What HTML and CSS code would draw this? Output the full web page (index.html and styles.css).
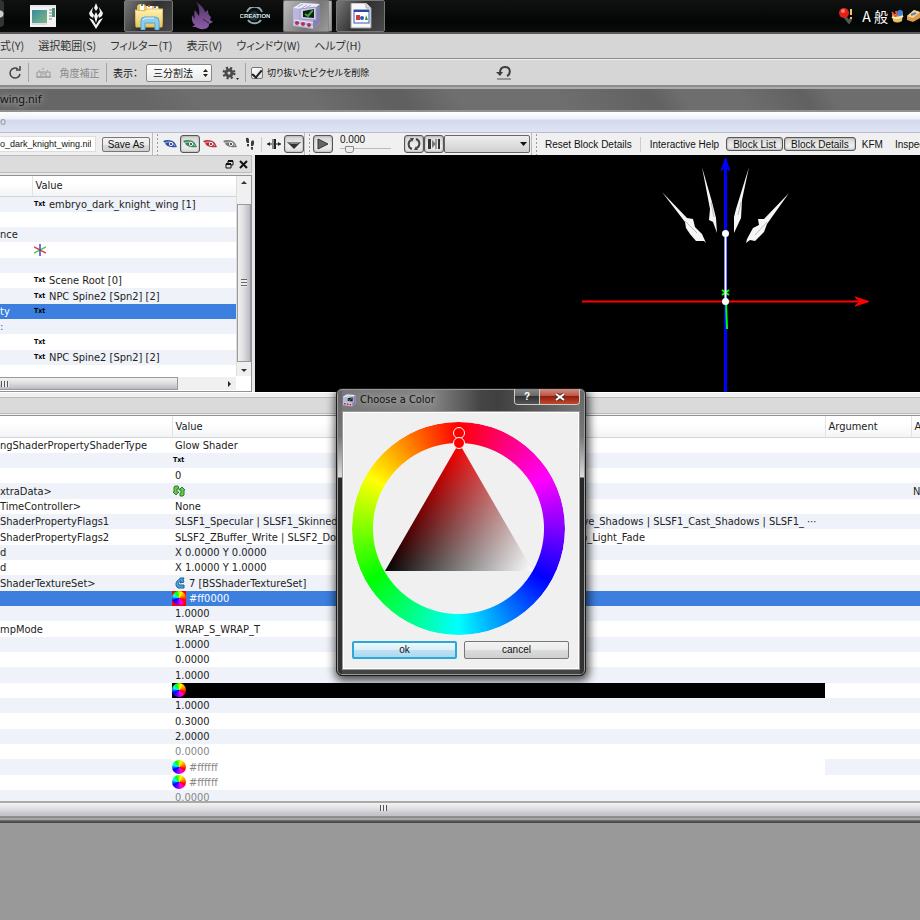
FILE: index.html
```html
<!DOCTYPE html>
<html lang="ja">
<head>
<meta charset="utf-8">
<title>wing.nif</title>
<link rel="stylesheet" href="styles.css">
</head>
<body>
<svg class="defs" width="0" height="0" aria-hidden="true">
  <defs>
    <linearGradient id="folder" x1="0" y1="0" x2="0" y2="1"><stop offset="0" stop-color="#fff3b4"/><stop offset="1" stop-color="#e8c860"/></linearGradient>
    <linearGradient id="screen" x1="0" y1="0" x2="1" y2="1"><stop offset="0" stop-color="#3c8a9c"/><stop offset="1" stop-color="#7db886"/></linearGradient>
    <linearGradient id="bird" x1="0" y1="0" x2="0" y2="1"><stop offset="0" stop-color="#4d3560"/><stop offset="1" stop-color="#8c5ca8"/></linearGradient>
    <symbol id="eye" viewBox="0 0 14 10">
      <path d="M0 2C4 0 10 1 12 4L14 8C10 9 3 8 2 4z" fill="currentColor"/>
      <path d="M2 4C5 2 10 3 12 7" fill="none" stroke="#fff" stroke-opacity=".6"/>
      <circle cx="8" cy="5" r="2" fill="#fff"/><circle cx="8" cy="5" r="1" fill="#222"/>
    </symbol>
    <symbol id="nif" viewBox="0 0 30 28">
      <path d="M2 6L10 1 29 2 29 21 22 27 2 24z" fill="#b9b7dd"/>
      <path d="M2 6L22 8 29 2 10 1z" fill="#ececfb"/><path d="M22 8L29 2V21L22 27z" fill="#8583ad"/>
      <path d="M7 5L12 2M11 6L16 3M15 6L20 3" stroke="#aaa8cf"/>
      <path d="M9 7L25 5V18L9 17z" fill="#cfcdec" stroke="#9a98c0"/>
      <path d="M12 9L23 7V16L12 15z" fill="#151a18"/>
      <path d="M14 12L17 14 22 8" fill="none" stroke="#36a83a" stroke-width="2"/>
      <path d="M3 18L22 21M3 22L22 25" stroke="#e9e9fa"/>
      <circle cx="6" cy="21" r="2" fill="#b5304b"/><circle cx="12" cy="22" r="2" fill="#b5304b"/><circle cx="18" cy="23" r="2" fill="#b5304b"/>
    </symbol>
  </defs>
</svg>

<div class="desktop">
  <header class="taskbar">
    <span class="orb"></span>
    <nav class="tasks" aria-label="Taskbar">
      <button class="task" aria-label="Window"><svg width="26" height="24" viewBox="0 0 26 24"><path d="M0 1H26V23H0z" fill="#f3f3f3"/><path d="M0 1H26V3H0z" fill="#dce8ee"/><rect x="2" y="6" width="15" height="13" fill="url(#screen)"/><path d="M19 6H22M19 9H22M19 12H22M19 15H22" stroke="#adc2b8" stroke-width="2"/><rect x="22" y="4" width="3" height="9" fill="#57907a"/><path d="M2 20H17" stroke="#c2c8d2"/></svg></button>
      <button class="task" aria-label="Skyrim"><svg width="16" height="26" viewBox="0 0 16 26"><g fill="#f4f4f4"><path d="M8 0L10 5 8 8 6 5z"/><path d="M5 4L4 9 6 12 5 15 2 13 1 10z"/><path d="M11 4L12 9 10 12 11 15 14 13 15 10z"/><path d="M8 9L10 13 8 20 6 13z"/><path d="M1 15L5 17 8 22 11 17 15 15 8 26z"/></g></svg></button>
      <button class="task open" aria-label="Explorer"><svg width="28" height="28" viewBox="0 0 28 28"><path d="M2 4L4 2H9L11 4H23L24 7V24H2z" fill="#e8c768"/><path d="M5 3H9V8H5zM12 4H17V8H12zM19 5H23V9H19z" fill="#fff"/><path d="M6 2H8V4H6z" fill="#31a54f"/><path d="M13 3H15V5H13z" fill="#d74d3c"/><path d="M19 4H21V6H19z" fill="#3c7fd0"/><path d="M0 8L10 9 12 7H28L27 25H1z" fill="url(#folder)" stroke="#e0bd58"/><path d="M6 28V19Q6 15 10 15H20Q24 15 24 19V28H20V21H10V28z" fill="#8fcdf0" stroke="#4fa4d6"/><path d="M8 18Q8 16 12 16H19" fill="none" stroke="#e3f5ff"/></svg></button>
      <button class="task" aria-label="Phoenix"><svg width="22" height="28" viewBox="0 0 22 28"><path d="M5 0C10 3 13 6 14 10L17 8C17 12 18 13 20 15L19 18 22 20 18 22C19 27 10 29 5 25L1 25 4 23C0 20 1 16 1 13L4 17C3 13 3 11 4 8L8 14C9 9 8 4 5 0z" fill="url(#bird)"/><path d="M12 18C14 17 15 20 18 21" fill="none" stroke="#2b1838"/></svg></button>
      <button class="task" aria-label="Creation Kit"><svg width="30" height="18" viewBox="0 0 30 18"><path d="M7 5A8 8 0 0 1 22 5M8 13A8 8 0 0 0 21 13" fill="none" stroke="#8ea9ae" stroke-width="2"/><circle cx="14" cy="9" r="5" fill="#1f3034"/><text x="15" y="11" text-anchor="middle" class="creation">CREATION</text></svg></button>
      <button class="task open active" aria-label="NifSkope"><svg width="30" height="28"><use href="#nif"/></svg></button>
      <button class="task open" aria-label="Document"><svg width="22" height="26" viewBox="0 0 22 26"><path d="M1 0H16L21 5V25H1z" fill="#f8f8f8" stroke="#999"/><path d="M16 0V5H21" fill="#ddd" stroke="#aaa"/><rect x="4" y="7" width="15" height="13" fill="#fff" stroke="#3b56b5"/><path d="M4 8H19" stroke="#2d48a4" stroke-width="2"/><path d="M6 12H10V17H6z" fill="#d33b3b"/><circle cx="12" cy="15" r="2" fill="#2e54c4"/><path d="M15 17L16 12 18 17z" fill="#2d9740"/></svg></button>
    </nav>
    <div class="tray">
      <svg width="14" height="16" viewBox="0 0 14 16"><path d="M6 9L10 14 12 11" fill="none" stroke="#555" stroke-width="3"/><circle cx="5" cy="5" r="5" fill="#e0221b"/><circle cx="4" cy="3" r="2" fill="#ff7a66"/><path d="M12 1V7M12 9V11" stroke="#f1c668" stroke-width="2"/></svg>
      <span class="ime">A 般</span>
      <svg width="13" height="14" viewBox="0 0 13 14"><path d="M1 5H12L11 12Q6 15 2 12z" fill="#e9bb62"/><path d="M1 3L5 8M5 2L6 7" stroke="#e8542b" stroke-width="2"/><circle cx="9" cy="4" r="3" fill="#3c85d8"/><path d="M1 8Q6 11 12 7" fill="none" stroke="#fff0bd" stroke-width="2"/></svg>
      <svg width="13" height="14" viewBox="0 0 13 14"><path d="M0 7L7 1 13 3V9L6 13 0 11z" fill="#d99b4a"/><path d="M0 7L7 1 13 3 6 9z" fill="#f6d79a"/><path d="M4 6L9 4" stroke="#5884b5" stroke-width="2"/></svg>
    </div>
  </header>

  <nav class="menubar" aria-label="Menu">
    <a href="#">式(Y)</a><a href="#">選択範囲(S)</a><a href="#">フィルター(T)</a><a href="#">表示(V)</a><a href="#">ウィンドウ(W)</a><a href="#">ヘルプ(H)</a>
  </nav>

  <div class="options">
    <button class="plain rotate" aria-label="Rotate"><svg width="14" height="14" viewBox="0 0 14 14"><path d="M10 3A5 5 0 1 0 12 8" fill="none" stroke="#444" stroke-width="1.500"/><path d="M8 4H12V0" fill="none" stroke="#444" stroke-width="1.500"/></svg></button>
    <span class="rule"></span>
    <button class="plain level" disabled><svg width="15" height="12" viewBox="0 0 15 12"><g fill="none" stroke="#999"><path d="M1 5H14V10H1zM5 5V10M10 5V10M6 7H9M0 10H15"/><path d="M3 3L4 4M7 1V3M12 3L11 4"/></g></svg>角度補正</button>
    <span class="rule"></span>
    <label class="overlay-label" for="overlay">表示：</label>
    <span class="picker"><select id="overlay"><option>三分割法</option></select><svg width="7" height="8" viewBox="0 0 7 8"><path d="M1 3L3.500 0 6 3zM1 5L3.500 8 6 5z" fill="#222"/></svg></span>
    <button class="plain gear" aria-label="Settings"><svg width="18" height="16" viewBox="0 0 18 16"><circle cx="7" cy="8" r="5" fill="none" stroke="#4a4a4a" stroke-width="3" stroke-dasharray="2 2"/><circle cx="7" cy="8" r="3" fill="none" stroke="#4a4a4a" stroke-width="3"/><path d="M14 13H17L15.500 15z" fill="#222"/></svg></button>
    <span class="rule"></span>
    <label class="check"><input type="checkbox" checked>切り抜いたピクセルを削除</label>
    <button class="plain undo" aria-label="Reset"><svg width="16" height="16" viewBox="0 0 16 16"><path d="M4 8C4 4 6 2 9 2c6 0 6 7 2 9" fill="none" stroke="#3c3c3c" stroke-width="2"/><path d="M0 7H7L4 11z" fill="#3c3c3c"/><path d="M1 14H15" stroke="#555"/></svg></button>
  </div>

  <main class="window">
    <div class="caption"><span>wing.nif</span></div>
    <div class="aero">o</div>
    <div class="toolbar">
      <input class="path" type="text" aria-label="File" value="o_dark_knight_wing.nif">
      <button class="button save">Save As</button>
      <span class="grip"></span>
      <button class="tool eye-blue" aria-label="Show blue"><svg width="14" height="10"><use href="#eye"/></svg></button>
      <button class="tool pressed eye-green" aria-label="Show green"><svg width="14" height="10"><use href="#eye"/></svg></button>
      <button class="tool eye-red" aria-label="Show red"><svg width="14" height="10"><use href="#eye"/></svg></button>
      <button class="tool eye-gray" aria-label="Show gray"><svg width="14" height="10"><use href="#eye"/></svg></button>
      <button class="tool" aria-label="Walk"><svg width="10" height="14" viewBox="0 0 10 14"><path d="M1 1Q4 0 4 3L4 6H2L1 4zM2 7H4V9Q3 10 2 9zM6 5Q7 2 9 4V7L8 9H6zM6 10H8V12Q7 14 6 12z" fill="#3b3b3b"/></svg></button>
      <span class="divider"></span>
      <button class="tool" aria-label="Flip"><svg width="14" height="12" viewBox="0 0 14 12"><path d="M0 6L3 4V8zM14 6L11 4V8z" fill="#222"/><path d="M0 6H5M9 6H14" stroke="#222"/><path d="M5 1H9V11H5z" fill="#888"/><path d="M8 1V11" stroke="#222" stroke-width="2"/></svg></button>
      <button class="tool pressed" aria-label="Perspective"><svg width="16" height="12" viewBox="0 0 16 12"><path d="M1 4H15L8 11z" fill="#333"/><path d="M1 4H15L11 6H5z" fill="#888"/></svg></button>
      <span class="grip"></span>
      <button class="tool pressed" aria-label="Play"><svg width="12" height="12" viewBox="0 0 12 12"><path d="M1 1L11 6 1 11z" fill="#666" stroke="#333"/></svg></button>
      <label class="time"><span>0.000</span><input type="range" min="0" max="100" value="12"></label>
      <button class="tool pressed" aria-label="Loop"><svg width="14" height="14" viewBox="0 0 14 14"><g fill="none" stroke="#444" stroke-width="2"><path d="M5 12A5 5 0 0 1 4 3M9 2A5 5 0 0 1 10 11"/></g><path d="M3 1H7L5 5zM11 13H7L9 9z" fill="#444"/></svg></button>
      <button class="tool pressed" aria-label="Switch"><svg width="14" height="12" viewBox="0 0 14 12"><path d="M1 1H4V11H1zM11 1H13V11H11z" fill="#333"/><path d="M5 2L9 6 5 10z" fill="#777"/><path d="M9 1V11" stroke="#555"/></svg></button>
      <span class="picker sequence"><select aria-label="Sequence"><option></option></select><svg width="7" height="5" viewBox="0 0 7 5"><path d="M0 0H7L3.500 4z" fill="#111"/></svg></span>
      <span class="grip"></span>
      <button class="tool text">Reset Block Details</button>
      <span class="divider wide"></span>
      <button class="tool text">Interactive Help</button>
      <button class="tool text pressed">Block List</button>
      <button class="tool text pressed">Block Details</button>
      <button class="tool text">KFM</button>
      <button class="tool text">Inspect</button>
    </div>

    <div class="work">
      <section class="dock">
        <div class="dock-bar">
          <button class="plain" aria-label="Float"><svg width="9" height="9" viewBox="0 0 9 9"><path d="M3 3V1H8V5H6M1 4H6V8H1z" fill="none" stroke="#111"/><path d="M3 1H8M1 4H6" stroke="#111" stroke-width="2"/></svg></button>
          <button class="plain" aria-label="Close"><svg width="9" height="9" viewBox="0 0 9 9"><path d="M1 1L8 8M8 1L1 8" stroke="#111" stroke-width="2"/></svg></button>
        </div>
        <div class="tree">
          <table class="rows tree-rows">
            <colgroup><col class="c-name"><col></colgroup>
            <thead><tr><th></th><th>Value</th></tr></thead>
            <tbody>
              <tr><td></td><td><b>Txt</b>embryo_dark_knight_wing [1]</td></tr>
              <tr><td></td><td></td></tr>
              <tr><td>nce</td><td></td></tr>
              <tr><td></td><td><svg width="12" height="12" viewBox="0 0 12 12"><path d="M0 3L12 9" stroke="#e8384c" stroke-width="1.500"/><path d="M0 9L12 3" stroke="#48cf48" stroke-width="1.500"/><path d="M6 0V12" stroke="#4b3fd0" stroke-width="1.500"/></svg></td></tr>
              <tr><td></td><td></td></tr>
              <tr><td></td><td><b>Txt</b>Scene Root [0]</td></tr>
              <tr><td></td><td><b>Txt</b>NPC Spine2 [Spn2] [2]</td></tr>
              <tr class="selected"><td>ty</td><td><b>Txt</b></td></tr>
              <tr class="link"><td>:</td><td></td></tr>
              <tr><td></td><td><b>Txt</b></td></tr>
              <tr><td></td><td><b>Txt</b>NPC Spine2 [Spn2] [2]</td></tr>
            </tbody>
          </table>
          <div class="vscroll"><span class="arrow up"></span><span class="thumb"></span><span class="arrow down"></span></div>
          <div class="hscroll"><span class="thumb"></span><span class="arrow right"></span></div>
        </div>
      </section>
      <section class="view" aria-label="Render view">
        <svg width="665" height="237" viewBox="0 0 665 237">
          <path d="M470.500 4V237" stroke="#00f" stroke-width="3"/>
          <path d="M470.500 3L475 16 470.500 12 466 16z" fill="#00f" stroke="#00f"/>
          <path d="M327 146.500H612" stroke="#f00" stroke-width="2"/>
          <path d="M614 146.500L600 142 605 146.500 600 151z" fill="#f00" stroke="#f00"/>
          <path d="M471 147L472 174" stroke="#0f0" stroke-width="2"/>
          <path d="M467 135L474 140M474 135L467 140" stroke="#0f0" stroke-width="2"/>
          <path d="M470.500 78V147" stroke="#fff" stroke-width="2"/>
          <circle cx="470.500" cy="78.500" r="3.500" fill="#fff"/><circle cx="470.500" cy="146.500" r="3.500" fill="#fff"/>
          <g fill="#f6f6f6">
            <path d="M407 37L432 63 438 64 440 72 447 79 451 88 449 86 441 86 435 79 431 73 430 67z"/>
            <path d="M447 12L457 47 461 63 462 78 458 67 454 65 455 54z"/>
            <path d="M494 12L487 45 486 63 479 78 479 62 481 54z"/>
            <path d="M534 38L512 69 509 77 500 86 495 85 491 88 492 84 498 73 504 70 503 64 509 64z"/>
          </g>
          <g stroke="#bbb" fill="none"><path d="M430 66L442 78M456 47L459 62M486 47L483 60M512 67L500 80"/></g>
        </svg>
      </section>
    </div>

    <section class="details">
      <div class="details-bar"></div>
      <div class="details-body">
        <table class="rows detail-rows">
          <colgroup><col class="d-name"><col><col class="d-arg"><col class="d-last"></colgroup>
          <thead><tr><th></th><th>Value</th><th>Argument</th><th>A</th></tr></thead>
          <tbody>
            <tr><td>ngShaderPropertyShaderType</td><td>Glow Shader</td><td></td><td></td></tr>
            <tr><td></td><td><b>Txt</b></td><td></td><td></td></tr>
            <tr><td></td><td>0</td><td></td><td></td></tr>
            <tr><td>xtraData&gt;</td><td><svg class="mark" width="12" height="12" viewBox="0 0 12 12"><g fill="#6cc653" stroke="#2c7f27"><path d="M5 1H2L1 2V7H0L3 10 6 7H4V4H6z"/><path d="M7 11H10L11 10V5H12L9 2 6 5H8V8H7z"/></g></svg></td><td></td><td>N</td></tr>
            <tr><td>TimeController&gt;</td><td>None</td><td></td><td></td></tr>
            <tr><td>ShaderPropertyFlags1</td><td><div class="flags spread"><span>SLSF1_Specular | SLSF1_Skinned |</span><span>SLSF1_Recieve_Shadows | SLSF1_Cast_Shadows | SLSF1_ ⋯</span></div></td><td></td><td></td></tr>
            <tr><td>ShaderPropertyFlags2</td><td><div class="flags"><span>SLSF2_ZBuffer_Write | SLSF2_Double_Sided |</span><span>SLSF2_EnvMap_Light_Fade</span></div></td><td></td><td></td></tr>
            <tr><td>d</td><td>X 0.0000 Y 0.0000</td><td></td><td></td></tr>
            <tr><td>d</td><td>X 1.0000 Y 1.0000</td><td></td><td></td></tr>
            <tr><td>ShaderTextureSet&gt;</td><td><svg class="ref" width="10" height="12" viewBox="0 0 10 12"><path d="M5 1L9 1 8 3 9 5 5 6 6 4C4 4 3 6 4 8L9 8V11H3C0 9 0 4 5 2z" fill="#4fa3dc" stroke="#1f5f93"/></svg>7 [BSShaderTextureSet]</td><td></td><td></td></tr>
            <tr class="selected"><td></td><td><i class="swatch red"><i class="wheel-icon"></i></i>#ff0000</td><td></td><td></td></tr>
            <tr><td></td><td>1.0000</td><td></td><td></td></tr>
            <tr><td>mpMode</td><td>WRAP_S_WRAP_T</td><td></td><td></td></tr>
            <tr><td></td><td>1.0000</td><td></td><td></td></tr>
            <tr><td></td><td>0.0000</td><td></td><td></td></tr>
            <tr><td></td><td>1.0000</td><td></td><td></td></tr>
            <tr><td></td><td class="black"><i class="swatch"><i class="wheel-icon"></i></i></td><td></td><td></td></tr>
            <tr><td></td><td>1.0000</td><td></td><td></td></tr>
            <tr><td></td><td>0.3000</td><td></td><td></td></tr>
            <tr><td></td><td>2.0000</td><td></td><td></td></tr>
            <tr class="muted"><td></td><td>0.0000</td><td></td><td></td></tr>
            <tr class="muted"><td></td><td class="white"><i class="swatch"><i class="wheel-icon"></i></i>#ffffff</td><td></td><td></td></tr>
            <tr class="muted"><td></td><td><i class="swatch"><i class="wheel-icon"></i></i>#ffffff</td><td></td><td></td></tr>
            <tr class="muted"><td></td><td>0.0000</td><td></td><td></td></tr>
          </tbody>
        </table>
      </div>
      <div class="details-scroll"><span></span></div>
      <div class="frame-bottom"></div>
    </section>
  </main>

  <div class="dialog" role="dialog" aria-labelledby="dlg-title">
    <div class="dialog-bar">
      <svg width="14" height="13"><use href="#nif"/></svg>
      <h1 id="dlg-title">Choose a Color</h1>
      <div class="dialog-controls">
        <button class="help" aria-label="Help">?</button>
        <button class="close" aria-label="Close"><svg width="10" height="8" viewBox="0 0 10 8"><path d="M1 1L9 7M9 1L1 7" stroke="#5a2a2a" stroke-width="4"/><path d="M1 1L9 7M9 1L1 7" stroke="#fff" stroke-width="2"/></svg></button>
      </div>
    </div>
    <div class="dialog-body">
      <div class="wheel">
        <div class="ring"></div>
        <div class="triangle"></div>
        <span class="knob hue"></span>
        <span class="knob tone"></span>
      </div>
      <div class="actions"><button class="button default">ok</button><button class="button">cancel</button></div>
    </div>
  </div>
</div>
</body>
</html>
```
FILE: styles.css
```css
* { box-sizing: border-box; }

:root {
  --ui: "DejaVu Sans Condensed", "DejaVu Sans", "Noto Sans CJK JP", sans-serif;
  --gothic: "Liberation Sans", "Noto Sans CJK JP", sans-serif;
  --jp: "Noto Sans CJK JP", sans-serif;
  --stripe: #eff3f9;
  --select: #3c7fdf;
}

body {
  margin: 0;
  background: #999;
  font: 11px/15px var(--ui);
  color: #222;
}

.defs { position: absolute; }

button, input, select { font: inherit; color: inherit; margin: 0; }
button { display: flex; align-items: center; justify-content: center; padding: 0; border: 0; background: none; }
svg { display: block; flex: none; }
a { color: inherit; text-decoration: none; }

.desktop { position: relative; min-height: 100vh; overflow: hidden; }

/* Taskbar */
.taskbar {
  display: flex;
  height: 34px;
  background: linear-gradient(#111, #030606 70%, #0b0b0b);
  border-bottom: 2px solid #5c585c;
}
.orb { width: 4px; height: 27px; background: radial-gradient(circle at 0 14px, #ccc 3px, #333 4px); border-radius: 0 4px 4px 0; }
.tasks { display: flex; gap: 4px; padding-left: 14px; }
.task { width: 49px; height: 32px; }
.task.open { border: 1px solid #777; border-radius: 2px; background: linear-gradient(120deg, #777, #303030 50%, #494949); }
.task.active { background: linear-gradient(120deg, #bbb, #777 60%, #9a9a9a); border-right: 4px double #888; }
.creation { font: bold 6px var(--gothic); fill: #d7e5e5; }
.tray { display: flex; align-items: center; gap: 3px; margin-left: auto; }
.ime { padding: 0 0 0 6px; font: 14px/20px var(--jp); color: #fff; white-space: nowrap; }

/* Menu and option bars */
.menubar {
  display: flex;
  gap: 14px;
  height: 25px;
  background: #d6d6d6;
  border-bottom: 1px solid #8c8c8c;
  font: 11px/23px var(--jp);
  font-feature-settings: "palt";
  color: #333;
}
.options {
  display: flex;
  align-items: center;
  height: 28px;
  background: #d6d6d6;
  border-top: 1px solid #eee;
  border-bottom: 2px solid #8c8c8c;
  font: 10px/16px var(--jp);
  font-feature-settings: "palt";
  color: #111;
}
.rule { width: 1px; height: 19px; background: #a3a3a3; }
.rotate { width: 28px; padding-left: 1px; }
.level { gap: 9px; width: 77px; color: #888; }
.overlay-label { width: 39px; padding-left: 6px; white-space: nowrap; }
.picker { position: relative; display: flex; align-items: center; }
.picker select { appearance: none; width: 66px; height: 18px; padding: 0 6px; border: 1px solid #888; border-radius: 2px; background: linear-gradient(#fff, #e8e8e8); }
.picker svg { position: absolute; right: 3px; }
.gear { width: 33px; padding-left: 4px; }
.check { display: flex; align-items: center; gap: 4px; padding-left: 5px; font-size: 9px; white-space: nowrap; }
.check input {
  appearance: none;
  width: 12px;
  height: 12px;
  border: 1px solid #777;
  border-radius: 2px;
  background: linear-gradient(135deg, #fff, #ddd);
  display: grid;
  place-items: center;
}
.check input::after { content: ""; width: 4px; height: 8px; border: solid #222; border-width: 0 2px 2px 0; transform: rotate(40deg); }
.undo { margin-left: 127px; }

/* Document window */
.caption {
  height: 25px;
  padding-top: 2px;
  border-top: 2px solid #aaa;
  border-bottom: 2px solid #919191;
  font: 11px/16px "Noto Sans", var(--jp);
  color: #111;
  background: linear-gradient(55deg, #666 0 16%, #6e6e6e 22% 34%, #606060 42% 44%, #6f6f6f 50% 60%, #626262 70% 71%, #6e6e6e 74% 80%, #616161 87%, #6d6d6d 90%);
}
.caption span { text-shadow: 0 0 5px #aaa, 0 0 8px #aaa, 0 0 12px #999; }
.aero {
  height: 21px;
  line-height: 20px;
  color: #999;
  border-bottom: 1px solid #b8bccb;
  background: linear-gradient(#fff, #edf1fa 7px, #d2d9ee 8px, #dfe5f4);
}

.toolbar {
  display: flex;
  align-items: center;
  height: 22px;
  overflow: hidden;
  background: #f0f0f0;
  font-family: var(--gothic);
  font-size: 10px;
  color: #111;
}
.toolbar > * { flex: none; }
.path { width: 96px; height: 16px; margin-right: 6px; padding: 0 4px 0 0; border: 1px solid #ddd; border-left: 0; background: #fff; font-size: 9px; text-align: right; }
.button { height: 18px; border: 1px solid #777; border-radius: 2px; background: linear-gradient(#f3f3f3, #ebebeb 50%, #dcdcdc 50%, #cfcfcf); color: #111; }
.save { height: 15px; width: 48px; margin-right: 2px; }
.grip { width: 8px; height: 22px; border-left: 1px solid #bbb; background: radial-gradient(circle, #999 1px, #f0f0f0 1px) 3px 0 / 3px 4px repeat-y; }
.divider { width: 1px; height: 15px; margin: 0 2px 0 1px; background: #ccc; }
.divider.wide { margin: 0 3px 0 2px; }
.tool { width: 20px; height: 18px; }
.tool.pressed { border: 1px solid #555; border-radius: 3px; background: linear-gradient(#d2d2d2, #eee 60%, #ddd); box-shadow: inset 0 0 2px #888; }
.tool.text { width: auto; padding: 0 6px; white-space: nowrap; }
.tool.text.pressed { height: 14px; margin-left: 1px; }
.eye-blue { color: #2d50a8; }
.eye-green { color: #34895a; }
.eye-red { color: #c12e36; }
.eye-gray { color: #777; }
.time { display: flex; flex-direction: column; width: 71px; height: 20px; padding: 1px 13px 0 7px; line-height: 10px; }
.time input { appearance: none; width: 100%; height: 8px; background: linear-gradient(#bbb, #bbb) 0 3px / 100% 1px no-repeat; }
.time input::-webkit-slider-thumb { appearance: none; width: 9px; height: 7px; border: 1px solid #888; border-radius: 0 0 3px 3px; background: #eee; }
.sequence { margin-right: 1px; }
.picker.sequence select { width: 86px; border-color: #666; background: linear-gradient(#eee, #d0d0d0); }
.grip + .tool.pressed { margin-left: 1px; }

.work { display: flex; height: 237px; background: #e8e8e8; }
.dock { flex: none; width: 252px; display: flex; flex-direction: column; }
.dock-bar { display: flex; justify-content: flex-end; align-items: center; gap: 5px; height: 18px; margin-bottom: 2px; padding-right: 3px; background: #dcdcdc; border: 1px solid #bbb; border-left: 0; }
.tree {
  flex: 1;
  display: grid;
  grid-template: 1fr 15px / 1fr 15px;
  border: 1px solid #8e929c;
  border-left: 0;
  background: #fff;
}

.rows { width: 100%; border-collapse: collapse; table-layout: fixed; align-self: start; }
.rows th { height: 21px; padding: 0 0 0 3px; text-align: left; font-weight: normal; background: linear-gradient(#fff 35%, #f3f4f6); border-bottom: 1px solid #d5d5d5; }
.rows th + th { border-left: 1px solid #e0e3ea; }
.rows td { height: 15px; padding: 0 0 0 3px; line-height: 15px; white-space: nowrap; overflow: hidden; background: #fff; }
.rows tbody tr:nth-child(3n + 1) td { height: 16px; }
.rows td:first-child { padding-left: 0; }
.rows td > svg { display: inline-block; vertical-align: top; margin-top: 1px; }
.rows b { display: inline-block; width: 15px; font: bold 7px/15px "DejaVu Sans Condensed", sans-serif; color: #000; vertical-align: top; }
.tree-rows th { height: 20px; }
.tree-rows tbody tr:nth-child(odd) td { background: var(--stripe); }
.tree-rows tbody td + td { padding-left: 2px; }
.detail-rows tbody tr:nth-child(even) td { background: var(--stripe); }
.detail-rows td b { margin-left: -2px; }
.rows tbody tr.selected td { background: var(--select); color: #fff; }
.rows tr.link td { color: #2666c4; }
.rows tr.muted td { color: #888; }
.rows tbody tr td.black { background: #000; }
.rows tbody tr td.white { background: #fff; }
.c-name { width: 32px; }
.d-name { width: 172px; }
.d-arg { width: 86px; }
.d-last { width: 9px; }
.detail-rows td:last-child { padding-left: 2px; }
.rows .ref { margin-right: 4px; }
.rows .mark { margin-left: -2px; }

.swatch { display: inline-block; width: 14px; height: 15px; margin: 0 3px 0 -3px; vertical-align: top; }
.swatch.red { background: #f00; }
.wheel-icon { display: block; width: 14px; height: 14px; border-radius: 50%; background: conic-gradient(from 20deg, #ff0, #f80, #f00, #f0f, #60f, #00f, #0ff, #0f0, #ff0); }
.flags { display: flex; }
.flags span:first-child { width: 338px; overflow: hidden; }
.flags.spread { justify-content: space-between; padding-right: 8px; }
.flags.spread span:first-child { width: auto; }

.vscroll { display: flex; flex-direction: column; border-left: 1px solid #ddd; background: #f0f0f0; }
.vscroll .thumb { flex: 1; display: grid; place-items: center; border: 1px solid #999; background: linear-gradient(90deg, #f2f2f2, #dcdce0 50%, #b9b9c0); }
.vscroll .thumb::after { content: ""; width: 6px; height: 8px; background: repeating-linear-gradient(#666 0 1px, #eee 1px 3px); }
.vscroll .arrow.up { height: 28px; padding-top: 5px; }
.vscroll .arrow.down { height: 14px; padding-top: 7px; }
.arrow { display: flex; justify-content: center; }
.arrow::after { content: ""; width: 0; height: 0; border: 3px solid transparent; }
.arrow.up::after { border-top: 0; border-bottom-color: #333; }
.arrow.down::after { border-bottom: 0; border-top-color: #333; }
.arrow.right::after { border-right: 0; border-left-color: #222; }
.hscroll { display: flex; justify-content: space-between; align-items: center; margin: 1px 0; background: #f0f0f0; padding-right: 5px; }
.hscroll .thumb { width: 178px; height: 13px; border: 1px solid #999; border-left: 0; background: linear-gradient(#f2f2f2, #dcdce0 50%, #b9b9c0); }
.hscroll .thumb::after { content: ""; display: block; width: 8px; height: 6px; margin: 3px 0 0 1px; background: repeating-linear-gradient(90deg, #555 0 1px, #eee 1px 3px); }

.view { flex: 1; margin-left: 3px; background: #000; overflow: hidden; }

.details { background: #f0f0f0; border-top: 1px solid #fff; }
.details-bar { height: 17px; margin-top: 4px; background: #dadada; border: solid #bbb; border-width: 1px 0; }
.details-body { height: 386px; margin-top: 1px; overflow: hidden; background: #fff; border-top: 1px solid #8e929c; }
.details-scroll { display: flex; align-items: center; padding: 0 0 3px 380px; height: 14px; border-top: 2px solid #aaa; background: linear-gradient(#f2f2f2, #dedee2 50%, #c0c0c8); }
.details-scroll span { width: 7px; height: 6px; background: repeating-linear-gradient(90deg, #555 0 1px, #eee 1px 3px); }
.frame-bottom { height: 8px; background: linear-gradient(#ddd, #777 2px, #bbb 4px, #555 6px, #444); }

/* Color dialog */
.dialog {
  position: absolute;
  left: 336px;
  top: 388px;
  width: 250px;
  padding: 0 5px 5px;
  border: 1px solid #1c1c1c;
  border-radius: 6px;
  background:
    linear-gradient(#666, #777 45px, #ddd 86px, #282828 87px, #333) 1px 2px / 4px 100% no-repeat,
    linear-gradient(#666, #777 45px, #ddd 86px, #282828 87px, #333) 243px 2px / 4px 100% no-repeat,
    linear-gradient(90deg, #777, #858585 38%, #454545 58%, #404040 65%, #777) 0 0 / 100% 24px no-repeat,
    #444;
  box-shadow: inset 0 0 0 1px #999, 1px 3px 10px 2px rgba(0, 0, 0, .7);
}
.dialog-bar { display: flex; align-items: center; height: 22px; gap: 4px; }
.dialog-bar h1 { margin: 0; font: 11px/18px var(--ui); color: #111; text-shadow: 0 0 6px #bbb, 0 0 10px #aaa; }
.dialog-controls { display: flex; align-self: flex-start; margin-left: auto; height: 16px; border: 1px solid #ccc; border-top: 0; border-radius: 0 0 4px 4px; overflow: hidden; }
.help { width: 24px; background: linear-gradient(#888, #666 50%, #333 50%, #555); color: #fff; font: bold 10px/14px var(--gothic); }
.close { width: 40px; border-left: 1px solid #ccc; background: linear-gradient(#d29084, #b8503c 50%, #951d0b 50%, #c14830); }
.dialog-body { border: 1px solid #999; background: #f0f0f0; box-shadow: inset 0 0 0 1px #fff; padding: 10px 10px 10px 9px; }
.wheel { position: relative; height: 213px; width: 213px; }
.ring {
  position: absolute;
  inset: 0;
  border-radius: 50%;
  background: conic-gradient(#f00, #f0f, #00f, #0ff, #0f0, #ff0, #f00);
  mask: radial-gradient(circle, transparent 85px, #000 86px);
}
.triangle {
  position: absolute;
  left: 33px;
  top: 21px;
  width: 148px;
  height: 128px;
  clip-path: polygon(50% 0, 100% 100%, 0 100%);
  background: linear-gradient(120deg, #000 33%, #fff), linear-gradient(#f00, #000);
  background-blend-mode: screen;
}
.knob { position: absolute; left: 101px; width: 12px; height: 12px; border: 1px solid #fff; border-radius: 50%; background: #f00; }
.hue { top: 5px; }
.tone { top: 15px; }
.actions { display: grid; grid-template-columns: 1fr 1fr; gap: 7px; margin-top: 6px; font: 10px/16px var(--gothic); }
.default { border: 2px solid #2aa9d8; background: linear-gradient(#eef7fc, #d9eef9 50%, #bfe2f4 50%, #aed8ee); }
```
